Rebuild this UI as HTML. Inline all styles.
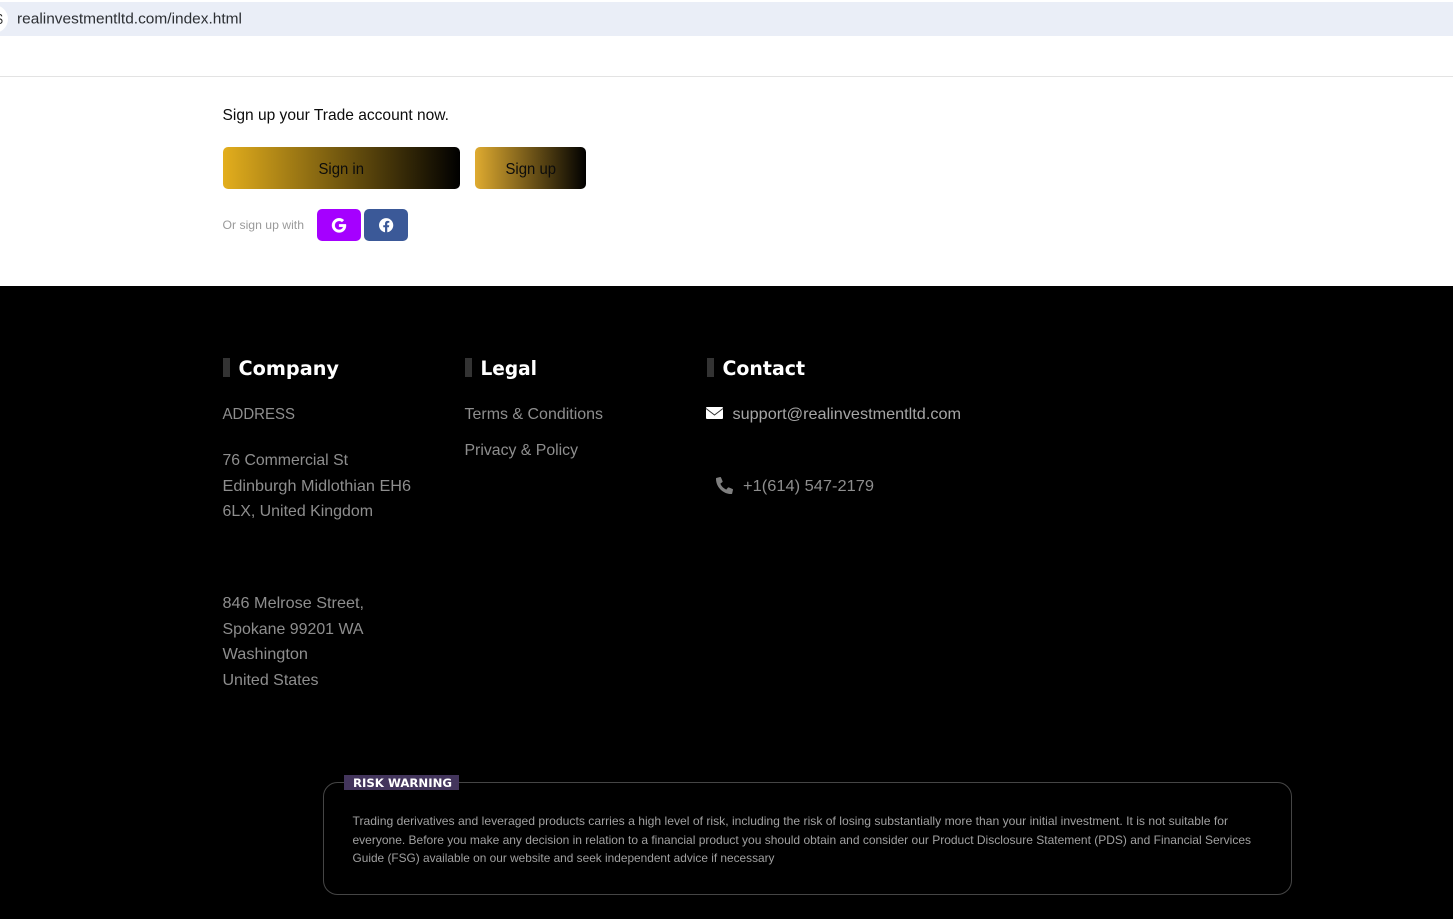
<!DOCTYPE html>
<html>
<head>
<meta charset="utf-8">
<title>Sign up</title>
<style>
html,body{margin:0;padding:0;background:#fff;overflow:hidden}
svg{display:block}
text{font-family:"Liberation Sans",sans-serif}
.h{font-family:"DejaVu Sans",sans-serif;font-weight:700;font-size:19.500px;fill:#fff}
.t{font-size:16px;fill:#8e8e8e}
.w{font-size:12px;fill:#a0a0a0}
</style>
</head>
<body>
<svg width="1453" height="919" viewBox="0 0 1453 919" xmlns="http://www.w3.org/2000/svg">
<defs>
<linearGradient id="a" x1="0" x2="1" y1="0" y2="0"><stop offset="0" stop-color="#e3ae1d"/><stop offset="1" stop-color="#000"/></linearGradient>
<linearGradient id="b" x1="0" x2="1" y1="0" y2="0"><stop offset="0" stop-color="#dfab30"/><stop offset="1" stop-color="#000"/></linearGradient>
</defs>
<rect width="1453" height="919" fill="#fff"/>
<rect y="2" width="1453" height="34" fill="#eaeef7"/>
<circle cx="-6" cy="19" r="14" fill="#fff"/>
<text x="-4" y="24" font-size="15" fill="#222" textLength="7" lengthAdjust="spacingAndGlyphs">S</text>
<text x="17" y="23.500" font-size="14.500" fill="#2c2f33" textLength="225" lengthAdjust="spacingAndGlyphs">realinvestmentltd.com/index.html</text>
<rect y="76" width="1453" height="1" fill="#e3e3e3"/>

<text x="222.500" y="120" font-size="16" fill="#0c0c0c" textLength="226.500" lengthAdjust="spacingAndGlyphs">Sign up your Trade account now.</text>
<rect x="223" y="147" width="237" height="42" rx="5" fill="url(#a)"/>
<text x="318.500" y="174" font-size="16" fill="#0c0c0c" textLength="45.500" lengthAdjust="spacingAndGlyphs">Sign in</text>
<rect x="475" y="147" width="111" height="42" rx="5" fill="url(#b)"/>
<text x="505.500" y="174" font-size="16" fill="#0c0c0c" textLength="50.500" lengthAdjust="spacingAndGlyphs">Sign up</text>

<text x="222.500" y="229" font-size="12" fill="#9a9a9a" textLength="81.500" lengthAdjust="spacingAndGlyphs">Or sign up with</text>
<rect x="317" y="209" width="44" height="32" rx="5" fill="#a500ff"/>
<rect x="364" y="209" width="44" height="32" rx="5" fill="#3b5998"/>
<g transform="translate(332,218) scale(0.0287)" fill="#fff" stroke="#fff" stroke-width="14"><path d="M488 261.8C488 403.3 391.1 504 248 504 110.8 504 0 393.2 0 256S110.8 8 248 8c66.8 0 123 24.5 166.3 64.9l-67.5 64.9C258.5 52.6 94.3 116.6 94.3 256c0 86.5 69.1 156.6 153.7 156.6 98.2 0 135-70.4 140.8-106.9H248v-85.3h236.1c2.300 12.7 3.900 24.900 3.900 41.400z"/></g>
<g transform="translate(378.800,217.900) scale(0.0287)" fill="#fff"><path d="M504 256C504 119 393 8 256 8S8 119 8 256c0 123.78 90.69 226.38 209.25 245V327.69h-63V256h63v-54.64c0-62.15 37-96.48 93.67-96.48 27.14 0 55.52 4.84 55.52 4.84v61h-31.28c-30.8 0-40.41 19.12-40.41 38.73V256h68.78l-11 71.69h-57.78V501C413.31 482.38 504 379.78 504 256z"/></g>

<rect y="286" width="1453" height="633" fill="#000"/>

<rect x="223" y="358" width="7" height="19" fill="#333"/>
<text class="h" x="238.500" y="375" textLength="100.500" lengthAdjust="spacingAndGlyphs">Company</text>
<rect x="465" y="358" width="7" height="19" fill="#333"/>
<text class="h" x="480.500" y="375" textLength="56.500" lengthAdjust="spacingAndGlyphs">Legal</text>
<rect x="707" y="358" width="7" height="19" fill="#333"/>
<text class="h" x="722.500" y="375" textLength="82.500" lengthAdjust="spacingAndGlyphs">Contact</text>

<text class="t" x="222.500" y="419" textLength="72.500" lengthAdjust="spacingAndGlyphs">ADDRESS</text>
<text class="t" x="222.500" y="465" textLength="125.500" lengthAdjust="spacingAndGlyphs">76 Commercial St</text>
<text class="t" x="222.500" y="491" textLength="188.500" lengthAdjust="spacingAndGlyphs">Edinburgh Midlothian EH6</text>
<text class="t" x="222.500" y="516" textLength="150.500" lengthAdjust="spacingAndGlyphs">6LX, United Kingdom</text>
<text class="t" x="222.500" y="608" textLength="141.500" lengthAdjust="spacingAndGlyphs">846 Melrose Street,</text>
<text class="t" x="222.500" y="634" textLength="141" lengthAdjust="spacingAndGlyphs">Spokane 99201 WA</text>
<text class="t" x="222.500" y="659" textLength="85.500" lengthAdjust="spacingAndGlyphs">Washington</text>
<text class="t" x="222.500" y="685" textLength="96" lengthAdjust="spacingAndGlyphs">United States</text>

<text class="t" x="464.500" y="419" textLength="138.500" lengthAdjust="spacingAndGlyphs">Terms &amp; Conditions</text>
<text class="t" x="464.500" y="455" textLength="113.500" lengthAdjust="spacingAndGlyphs">Privacy &amp; Policy</text>

<rect x="706" y="407" width="17" height="12" rx="1" fill="#fff"/>
<polyline points="706,408.500 714.500,415 723,408.500" fill="none" stroke="#333" stroke-width="1"/>
<text x="732.500" y="419" font-size="16" fill="#a6a6a6" textLength="228.500" lengthAdjust="spacingAndGlyphs">support@realinvestmentltd.com</text>

<g transform="translate(733,477) scale(-0.0332,0.0332)" fill="#7f7f7f"><path d="M493.4 24.600l-104-24c-11.300-2.600-22.900 3.300-27.500 13.900l-48 112c-4.200 9.800-1.400 21.300 6.900 28l60.600 49.600c-36 76.700-98.900 140.500-177.200 177.200l-49.600-60.600c-6.800-8.300-18.200-11.100-28-6.900l-112 48C3.900 366.500-2 378.100.6 389.400l24 104C27.100 504.200 36.700 512 48 512c256.100 0 464-207.500 464-464 0-11.200-7.700-20.900-18.600-23.400z"/></g>
<text class="t" x="743" y="491" textLength="131" lengthAdjust="spacingAndGlyphs">+1(614) 547-2179</text>

<rect x="323.500" y="782.500" width="968" height="112" rx="14" fill="none" stroke="#454545" stroke-width="1"/>
<rect x="344" y="775" width="115" height="15" fill="#43355c"/>
<text x="353" y="787" font-family="DejaVu Sans" font-size="11.500" font-weight="700" fill="#fff" style="font-family:'DejaVu Sans',sans-serif" textLength="99" lengthAdjust="spacingAndGlyphs">RISK WARNING</text>
<text class="w" x="352.500" y="825" textLength="875.500" lengthAdjust="spacingAndGlyphs">Trading derivatives and leveraged products carries a high level of risk, including the risk of losing substantially more than your initial investment. It is not suitable for</text>
<text class="w" x="352.500" y="844" textLength="898.500" lengthAdjust="spacingAndGlyphs">everyone. Before you make any decision in relation to a financial product you should obtain and consider our Product Disclosure Statement (PDS) and Financial Services</text>
<text class="w" x="352.500" y="862" textLength="422" lengthAdjust="spacingAndGlyphs">Guide (FSG) available on our website and seek independent advice if necessary</text>
</svg>
</body>
</html>
